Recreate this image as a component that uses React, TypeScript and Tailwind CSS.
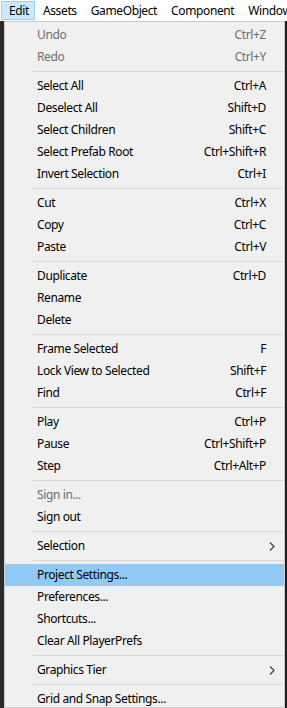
import React from "react";

type Item = { label: string; shortcut?: string; disabled?: boolean; submenu?: boolean; active?: boolean };

// groups of the Edit menu, a separator is drawn between each group
const groups: Item[][] = [
    [
        { label: "Undo", shortcut: "Ctrl+Z", disabled: true },
        { label: "Redo", shortcut: "Ctrl+Y", disabled: true },
    ],
    [
        { label: "Select All", shortcut: "Ctrl+A" },
        { label: "Deselect All", shortcut: "Shift+D" },
        { label: "Select Children", shortcut: "Shift+C" },
        { label: "Select Prefab Root", shortcut: "Ctrl+Shift+R" },
        { label: "Invert Selection", shortcut: "Ctrl+I" },
    ],
    [
        { label: "Cut", shortcut: "Ctrl+X" },
        { label: "Copy", shortcut: "Ctrl+C" },
        { label: "Paste", shortcut: "Ctrl+V" },
    ],
    [
        { label: "Duplicate", shortcut: "Ctrl+D" },
        { label: "Rename" },
        { label: "Delete" },
    ],
    [
        { label: "Frame Selected", shortcut: "F" },
        { label: "Lock View to Selected", shortcut: "Shift+F" },
        { label: "Find", shortcut: "Ctrl+F" },
    ],
    [
        { label: "Play", shortcut: "Ctrl+P" },
        { label: "Pause", shortcut: "Ctrl+Shift+P" },
        { label: "Step", shortcut: "Ctrl+Alt+P" },
    ],
    [
        { label: "Sign in...", disabled: true },
        { label: "Sign out" },
    ],
    [{ label: "Selection", submenu: true }],
    [
        { label: "Project Settings...", active: true },
        { label: "Preferences..." },
        { label: "Shortcuts..." },
        { label: "Clear All PlayerPrefs" },
    ],
    [{ label: "Graphics Tier", submenu: true }],
    [{ label: "Grid and Snap Settings..." }],
];

const menuBar = ["Edit", "Assets", "GameObject", "Component", "Window"];

function MenuRow({ item }: { item: Item }) {
    return (
        <div
            className={`h-[22px] flex items-center pl-[32px] pr-[18px] relative ${
                item.active ? "bg-[#91c9f7]" : ""
            } ${item.disabled ? "text-[#6d6d6d]" : "text-black"}`}
        >
            <span className="flex-1 whitespace-nowrap">{item.label}</span>
            {item.shortcut && <span className="whitespace-nowrap">{item.shortcut}</span>}
            {item.submenu && (
                <svg className="absolute right-[9px] top-[7px]" width="6" height="9" viewBox="0 0 6 9">
                    <polyline points="1,0.5 5,4.5 1,8.5" fill="none" stroke="#333" strokeWidth="1.1" />
                </svg>
            )}
        </div>
    );
}

export default function App() {
    return (
        <div
            className="w-[287px] h-[708px] overflow-hidden bg-[#262626] text-[12px] tracking-[-0.38px] flex flex-col"
            style={{ fontFamily: '"Noto Sans", "Open Sans", sans-serif' }}
        >
            {/* top menu bar */}
            <div className="h-[21px] bg-white flex items-start pl-[1px] pt-[1px] shrink-0 overflow-hidden">
                {menuBar.map((name, i) => (
                    <div
                        key={name}
                        className={`h-[19px] pl-[7px] pr-[5px] flex items-center whitespace-nowrap border shrink-0 ${
                            i === 0 ? "bg-[#cce8ff] border-[#99d1ff]" : "border-transparent"
                        }`}
                    >
                        {name}
                    </div>
                ))}
            </div>

            {/* dropdown */}
            <div className="flex flex-1 min-h-0">
                <div className="w-[4px] bg-[#2a2a2a]" />
                <div className="w-[281px] bg-[#f0f0f0] border border-[#cccccc] pt-[2px]">
                    {groups.map((group, gi) => (
                        <div key={gi}>
                            {gi > 0 && (
                                <div className="h-[7px] flex items-center ml-[28px] mr-[1px]">
                                    <div className="h-px w-full bg-[#d7d7d7]" />
                                </div>
                            )}
                            {group.map(item => (
                                <MenuRow key={item.label} item={item} />
                            ))}
                        </div>
                    ))}
                </div>
                <div className="flex-1 bg-[#1e1e1e]" />
            </div>
        </div>
    );
}
